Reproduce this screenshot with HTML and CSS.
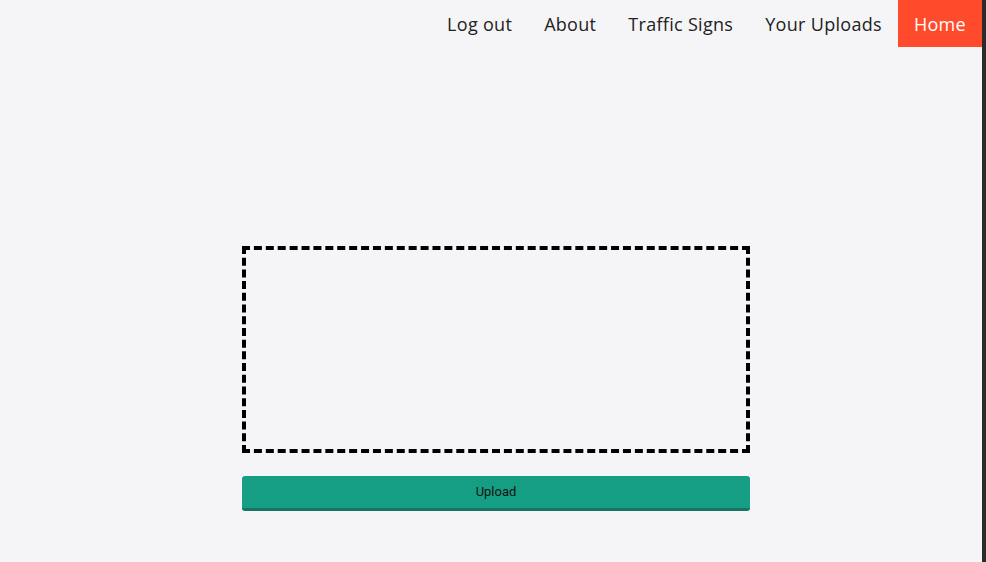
FILE: index.html
```html
<!DOCTYPE html>
<html lang="en">
<head>
<meta charset="utf-8">
<title>Home</title>
<link rel="stylesheet" href="styles.css">
</head>
<body>
<div class="page">
  <nav class="nav">
    <a class="nav-link" href="#">Log out</a>
    <a class="nav-link" href="#">About</a>
    <a class="nav-link" href="#">Traffic Signs</a>
    <a class="nav-link" href="#">Your Uploads</a>
    <a class="nav-link active" href="#">Home</a>
  </nav>
  <main class="main">
    <div class="upload-area">
      <div class="dropzone"></div>
      <button class="upload-btn" type="button">Upload</button>
    </div>
  </main>
</div>
<div class="edge"></div>
</body>
</html>
```
FILE: styles.css
```css
html, body {
  margin: 0;
  padding: 0;
  height: 100%;
}
body {
  display: flex;
  background: #f5f5f7;
  overflow: hidden;
}
.page {
  flex: 1;
  display: flex;
  flex-direction: column;
  background: #f5f5f7;
}
.edge {
  width: 4px;
  background: #2b2b2b;
}
.nav {
  display: flex;
  justify-content: flex-end;
  height: 47px;
}
.nav-link {
  display: flex;
  align-items: center;
  padding: 1px 16px 0;
  font-family: "Open Sans", sans-serif;
  font-size: 18px;
  letter-spacing: 0.3px;
  color: #222;
  text-decoration: none;
}
.nav-link.active {
  background: #ff4b2b;
  color: #fff;
}
.main {
  display: flex;
  justify-content: center;
  padding-top: 199px;
  padding-left: 10px;
}
.upload-area {
  width: 508px;
  display: flex;
  flex-direction: column;
  gap: 23px;
}
.dropzone {
  height: 199px;
  border: 4px dashed #000;
}
.upload-btn {
  height: 35px;
  border: none;
  border-bottom: 3px solid #177561;
  border-radius: 3px;
  background: #169e84;
  font-family: "Roboto", sans-serif;
  font-size: 13px;
  color: #111;
  padding: 0 0 2px;
}
```
